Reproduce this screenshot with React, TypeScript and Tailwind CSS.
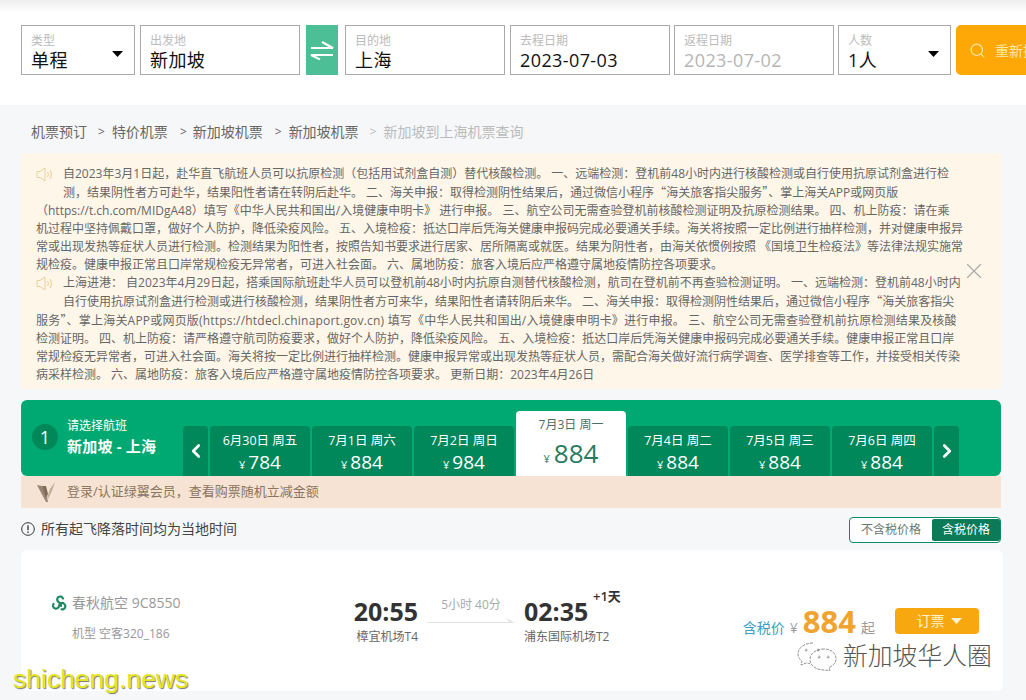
import { ChevronLeft, ChevronRight, Search, X } from 'lucide-react';

const noticeLines = [
  { pad: true, text: '自2023年3月1日起，赴华直飞航班人员可以抗原检测（包括用试剂盒自测）替代核酸检测。 一、远端检测：登机前48小时内进行核酸检测或自行使用抗原试剂盒进行检' },
  { pad: true, text: '测，结果阴性者方可赴华，结果阳性者请在转阴后赴华。 二、海关申报：取得检测阴性结果后，通过微信小程序“海关旅客指尖服务”、掌上海关APP或网页版' },
  { pad: false, text: '（https://t.ch.com/MIDgA48）填写《中华人民共和国出/入境健康申明卡》 进行申报。 三、航空公司无需查验登机前核酸检测证明及抗原检测结果。 四、机上防疫：请在乘' },
  { pad: false, text: '机过程中坚持佩戴口罩，做好个人防护，降低染疫风险。 五、入境检疫：抵达口岸后凭海关健康申报码完成必要通关手续。海关将按照一定比例进行抽样检测，并对健康申报异' },
  { pad: false, text: '常或出现发热等症状人员进行检测。检测结果为阳性者，按照告知书要求进行居家、居所隔离或就医。结果为阴性者，由海关依惯例按照 《国境卫生检疫法》等法律法规实施常' },
  { pad: false, text: '规检疫。健康申报正常且口岸常规检疫无异常者，可进入社会面。 六、属地防疫：旅客入境后应严格遵守属地疫情防控各项要求。' },
  { pad: true, text: '上海进港： 自2023年4月29日起，搭乘国际航班赴华人员可以登机前48小时内抗原自测替代核酸检测，航司在登机前不再查验检测证明。 一、远端检测：登机前48小时内' },
  { pad: true, text: '自行使用抗原试剂盒进行检测或进行核酸检测，结果阴性者方可来华，结果阳性者请转阴后来华。 二、海关申报：取得检测阴性结果后，通过微信小程序“海关旅客指尖' },
  { pad: false, wide: true, text: '服务”、掌上海关APP或网页版(https://htdecl.chinaport.gov.cn) 填写《中华人民共和国出/入境健康申明卡》进行申报。 三、航空公司无需查验登机前抗原检测结果及核酸' },
  { pad: false, text: '检测证明。 四、机上防疫：请严格遵守航司防疫要求，做好个人防护，降低染疫风险。 五、入境检疫：抵达口岸后凭海关健康申报码完成必要通关手续。健康申报正常且口岸' },
  { pad: false, text: '常规检疫无异常者，可进入社会面。海关将按一定比例进行抽样检测。健康申报异常或出现发热等症状人员，需配合海关做好流行病学调查、医学排查等工作，并接受相关传染' },
  { pad: false, text: '病采样检测。 六、属地防疫：旅客入境后应严格遵守属地疫情防控各项要求。 更新日期：2023年4月26日' },
];

const daysBefore = [
  { date: '6月30日 周五', price: '784' },
  { date: '7月1日 周六', price: '884' },
  { date: '7月2日 周日', price: '984' },
];

const daysAfter = [
  { date: '7月4日 周二', price: '884' },
  { date: '7月5日 周三', price: '884' },
  { date: '7月6日 周四', price: '884' },
];

const Caret = () => (
  <svg width="11" height="6" viewBox="0 0 11 6" className="flex-none">
    <path d="M0 0h11L5.5 6z" fill="currentColor" />
  </svg>
);

const Speaker = () => (
  <svg width="18" height="15" viewBox="0 0 18 15" fill="none" stroke="#e8cf9a" strokeWidth="1" className="absolute left-0 top-[2px]">
    <path d="M1 4.5h3L9 1v13L4 10.5H1z" />
    <path d="M11.5 5c1 1.5 1 3.500 0 5" stroke="#eec98a" />
    <path d="M14 3c1.800 2.600 1.800 6.400 0 9" stroke="#eec98a" />
  </svg>
);

// curly quotes are full width in the CJK face, Open Sans would make them narrow
const withCjkQuotes = (text: string) =>
  text.split(/([“”])/).map((part, i) =>
    part === '“' || part === '”' ? (
      <span key={i} className="font-['Noto_Sans_CJK_SC',sans-serif]">{part}</span>
    ) : (
      part
    )
  );

const Field = ({ label, value, width, select, muted }: { label: string; value: string; width: string; select?: boolean; muted?: boolean }) => (
  <div className={`relative h-[50px] flex-none border border-[#aaaaaa] bg-white pl-[9px] pt-[8px] ${width}`}>
    <div className="text-[12px] leading-[14px] text-[#bbbbbb]">{label}</div>
    <div className={`text-[18px] leading-[24px] tracking-[0.4px] ${muted ? 'text-[#b5b5b5]' : 'text-[#111111]'}`}>{value}</div>
    {select && (
      <div className="absolute right-[11px] top-[25px] text-black">
        <Caret />
      </div>
    )}
  </div>
);

const DayTab = ({ date, price }: { date: string; price: string }) => (
  <div className="flex h-[50px] w-[100px] flex-none flex-col items-center rounded-t-[4px] bg-[#00875a] text-white">
    <div className="mt-[6px] text-[12.500px] leading-[18px]">{date}</div>
    <div className="-mt-[1px] flex items-baseline leading-[26px]">
      <span className="mr-[3px] text-[11px]">¥</span>
      <span className="text-[19px]">{price}</span>
    </div>
  </div>
);

export default function App() {
  return (
    <div className="relative h-[700px] w-[1026px] overflow-hidden bg-[#f6f7f8] font-['Open_Sans','Noto_Sans_CJK_SC',sans-serif]">
      {/* search bar */}
      <div className="h-[105px] bg-gradient-to-b from-[#eeeeee] via-white via-[12px] to-white pl-[21px] pt-[25px]">
        <div className="flex">
          <Field label="类型" value="单程" width="w-[114px]" select />
          <div className="ml-[5px]">
            <Field label="出发地" value="新加坡" width="w-[160px]" />
          </div>
          <div className="ml-[6px] flex h-[50px] w-[32px] flex-none items-center justify-center bg-[#4dbf97]">
            <svg width="24" height="20" viewBox="0 0 24 20" fill="none" stroke="white" strokeWidth="2">
              <path d="M1 8h22L12 2" />
              <path d="M23 15H1l9 4.500" />
            </svg>
          </div>
          <div className="ml-[7px]">
            <Field label="目的地" value="上海" width="w-[160px]" />
          </div>
          <div className="ml-[5px]">
            <Field label="去程日期" value="2023-07-03" width="w-[160px]" />
          </div>
          <div className="ml-[4px]">
            <Field label="返程日期" value="2023-07-02" width="w-[160px]" muted />
          </div>
          <div className="ml-[4px]">
            <Field label="人数" value="1人" width="w-[113px]" select />
          </div>
          <div className="ml-[5px] flex h-[50px] w-[110px] flex-none items-center rounded-[5px] bg-[#fda806] pl-[13px] text-[#ffe9a8]">
            <Search size={17} strokeWidth={1.600} className="flex-none" />
            <span className="ml-[9px] whitespace-nowrap text-[14px]">重新搜索</span>
          </div>
        </div>
      </div>

      <div className="w-[982px] pl-[21px]">
        {/* breadcrumb */}
        <div className="flex h-[48px] items-center whitespace-nowrap pl-[10px] pt-[6px] text-[14px] leading-[20px] text-[#666666]">
          <span>机票预订</span>
          <span className="ml-[11px] mr-[7px] text-[12px]">&gt;</span>
          <span>特价机票</span>
          <span className="ml-[12px] mr-[6px] text-[12px]">&gt;</span>
          <span>新加坡机票</span>
          <span className="ml-[12px] mr-[7px] text-[12px]">&gt;</span>
          <span>新加坡机票</span>
          <span className="ml-[11px] mr-[7px] text-[12px] text-[#bbbbbb]">&gt;</span>
          <span className="text-[#bbbbbb]">新加坡到上海机票查询</span>
        </div>

        {/* notice */}
        <div className="relative h-[236px] w-[980px] rounded-[4px] bg-[#fef7e9] pl-[15px] pt-[12px] text-[12px] leading-[18px] text-[#666666]">
          {noticeLines.map((line, i) => (
            <div key={i} className={`relative whitespace-nowrap ${line.pad ? 'pl-[27px]' : ''} ${line.wide ? 'tracking-[0.2px]' : ''}`}>
              {(i === 0 || i === 6) && <Speaker />}
              {withCjkQuotes(line.text)}
            </div>
          ))}
          <div className="absolute right-[14px] top-[105px] text-[#a8a8a8]">
            <X size={26} strokeWidth={1} />
          </div>
        </div>

        {/* date selector */}
        <div className="mt-[11px] w-[980px]">
          <div className="relative flex h-[76px] items-end rounded-[6px] bg-[#00a972] pl-[162px]">
            <div className="absolute left-[11px] top-[24px] flex h-[26px] w-[26px] items-center justify-center rounded-full bg-[#00875a] text-[18px] text-white">1</div>
            <div className="absolute left-[46px] top-[17px] whitespace-nowrap text-white">
              <div className="text-[12px] leading-[18px]">请选择航班</div>
              <div className="mt-[2px] text-[15px] font-bold leading-[18px] tracking-[0.2px]">新加坡 - 上海</div>
            </div>
            <div className="flex h-[50px] w-[25px] flex-none items-center justify-center rounded-t-[4px] bg-[#00875a] text-white">
              <ChevronLeft size={22} strokeWidth={3} />
            </div>
            <div className="ml-[2px] flex gap-[2px]">
              {daysBefore.map((d) => (
                <DayTab key={d.date} date={d.date} price={d.price} />
              ))}
            </div>
            <div className="ml-[2px] flex h-[65px] w-[110px] flex-none flex-col items-center rounded-t-[4px] bg-white text-[#2a7a5f]">
              <div className="mt-[5px] text-[12px] leading-[18px] text-[#4b6f62]">7月3日 周一</div>
              <div className="mt-[1px] flex items-baseline leading-[36px]">
                <span className="mr-[4px] text-[11px]">¥</span>
                <span className="text-[26px]">884</span>
              </div>
            </div>
            <div className="ml-[2px] flex gap-[2px]">
              {daysAfter.map((d) => (
                <DayTab key={d.date} date={d.date} price={d.price} />
              ))}
            </div>
            <div className="ml-[2px] flex h-[50px] w-[25px] flex-none items-center justify-center rounded-t-[4px] bg-[#00875a] text-white">
              <ChevronRight size={22} strokeWidth={3} />
            </div>
          </div>
          <div className="flex h-[32px] items-center bg-[#f7e3d3] pl-[16px]">
            <svg width="19" height="22" viewBox="0 0 19 22" className="flex-none">
              <path d="M0 4l5 1 5 12 1 4h-2z" fill="#9a8472" />
              <path d="M10 17L13 8l5-7-3 9-4 8z" fill="#c2ae9a" />
              <path d="M5 5l4 0 2 8-2 4z" fill="#7f6a58" />
            </svg>
            <span className="ml-[11px] whitespace-nowrap text-[13px] text-[#8a7560]">登录/认证绿翼会员，查看购票随机立减金额</span>
          </div>
        </div>

        {/* local time note + tax toggle */}
        <div className="flex h-[42px] w-[980px] items-center justify-between pt-[1px]">
          <div className="flex items-center pb-[2px] text-[14px] leading-[20px] text-[#444444]">
            <svg width="14" height="14" viewBox="0 0 14 14" fill="none" stroke="#333333" className="flex-none">
              <circle cx="7" cy="7" r="6.300" />
              <path d="M7 3.200v5M7 9.600v1.400" strokeWidth="1.300" />
            </svg>
            <span className="ml-[6px] whitespace-nowrap">所有起飞降落时间均为当地时间</span>
          </div>
          <div className="flex h-[26px] w-[152px] items-center justify-between rounded-[4px] border border-[#0a8a66] bg-white pl-[11px] text-[12px]">
            <span className="text-[#667a72]">不含税价格</span>
            <span className="flex h-[22px] w-[68px] items-center justify-center rounded-[2px] bg-[#0a7a57] text-white">含税价格</span>
          </div>
        </div>

        {/* flight card */}
        <div className="flex h-[141px] w-[982px] items-center rounded-[6px] bg-white">
          <div className="w-[333px] flex-none pb-[5px] pl-[31px]">
            <div className="flex items-center">
              <svg width="16" height="16" viewBox="0 0 16 16" fill="none" stroke="#1f8a62" strokeWidth="2.200" strokeLinecap="round" className="flex-none">
                <path d="M11 3.500A3 3 0 1 0 6.500 7c1.500.8 2.500 1.500 2.500 4" />
                <path d="M1.500 9A3 3 0 1 0 7 11c.3-1.500 1-3 4-3.200" />
                <path d="M9.500 14.300A3 3 0 1 0 11 8.300" />
              </svg>
              <span className="ml-[4px] whitespace-nowrap text-[14px] leading-[20px] text-[#999999]">春秋航空 9C8550</span>
            </div>
            <div className="ml-[20px] mt-[12px] whitespace-nowrap text-[12px] leading-[18px] text-[#999999]">机型 空客320_186</div>
          </div>
          <div className="flex w-[64px] flex-none flex-col items-end">
            <div className="text-[25px] font-bold leading-[30px] text-[#333333]">20:55</div>
            <div className="mt-[2px] whitespace-nowrap text-[12px] leading-[18px] text-[#666666]">樟宜机场T4</div>
          </div>
          <div className="ml-[9px] w-[88px] flex-none pb-[21px] text-center">
            <div className="whitespace-nowrap text-[12px] leading-[16px] text-[#aaaaaa]">5小时 40分</div>
            <svg width="88" height="6" viewBox="0 0 88 6" className="mt-[5px] block">
              <path d="M0 5h88l-9-5 3 4H0z" fill="#e2e2e2" />
            </svg>
          </div>
          <div className="relative ml-[9px] flex w-[90px] flex-none flex-col">
            <div className="text-[25px] font-bold leading-[30px] text-[#333333]">02:35</div>
            <div className="mt-[2px] whitespace-nowrap text-[12px] leading-[18px] text-[#666666]">浦东国际机场T2</div>
            <span className="absolute left-[69px] top-[-9px] whitespace-nowrap text-[13px] font-semibold leading-[18px] text-[#333333]">+1天</span>
          </div>
          <div className="ml-auto flex items-center pr-[24px]">
            <div className="flex items-baseline whitespace-nowrap">
              <span className="text-[14px] text-[#3a9fc0]">含税价</span>
              <span className="ml-[5px] text-[14px] text-[#999999]">¥</span>
              <span className="ml-[5px] text-[31px] font-bold leading-[34px] text-[#f0a32f]">884</span>
              <span className="ml-[5px] text-[14px] text-[#999999]">起</span>
            </div>
            <div className="ml-[20px] flex h-[26px] w-[84px] flex-none items-center justify-center gap-[6px] rounded-[4px] bg-[#f8a80f] pl-[4px] text-[14px] text-[#fff3cf]">
              <span>订票</span>
              <Caret />
            </div>
          </div>
        </div>
      </div>

      {/* image watermarks */}
      <div className="absolute left-[843px] top-[640px] whitespace-nowrap text-[24.800px] font-light leading-[30px] text-[#555555] [text-shadow:0_0_1px_white]">新加坡华人圈</div>
      <svg width="42" height="30" viewBox="0 0 42 30" fill="none" stroke="#777777" strokeWidth="0.800" strokeDasharray="3 1" className="absolute left-[796px] top-[641px]">
        <path d="M17 2C8 2 2 7 2 13c0 3 2 6 4 7l-1 4 5-2c1 0 2 .5 4 .5" />
        <path d="M28 8c-8 0-14 4.500-14 10.500S20 29 28 29l6 .5-1-3c4-2 7-4.500 7-8.500 0-6-5-10-12-10z" />
        <circle cx="10" cy="9" r="1" />
        <circle cx="22" cy="9" r="1" />
        <circle cx="23" cy="16" r="1" />
        <circle cx="32" cy="16" r="1" />
      </svg>
      <div className="absolute left-[13px] top-[661px] whitespace-nowrap font-['Liberation_Sans',sans-serif] text-[26.500px] leading-[36px] text-[#e6e61a] [text-shadow:1px_1px_1px_#777777]">shicheng.news</div>
    </div>
  );
}
